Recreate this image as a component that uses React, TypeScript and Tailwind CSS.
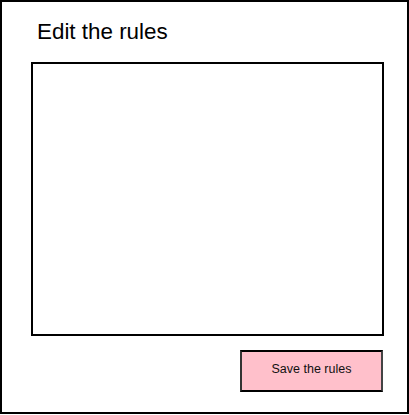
export default function App() {
  return (
    <div className="w-[409px] h-[414px] border-2 border-black bg-white flex flex-col box-border" style={{ fontFamily: '"Liberation Sans", Arial, sans-serif' }}>
      <div className="ml-[35px] mt-[17px] text-[22.4px] leading-[25px] text-black">Edit the rules</div>
      <textarea className="ml-[29px] mt-[18px] w-[353px] h-[274px] border-2 border-black bg-white resize-none outline-none" />
      <div className="flex justify-start">
        <button className="ml-[238px] mt-[14px] w-[143px] h-[42px] pb-[4px] bg-[#ffc0cb] border-2 border-t-black border-l-[#333] border-r-[#444] border-b-black text-[12.5px] text-[#111] flex items-center justify-center">
          Save the rules
        </button>
      </div>
    </div>
  );
}
